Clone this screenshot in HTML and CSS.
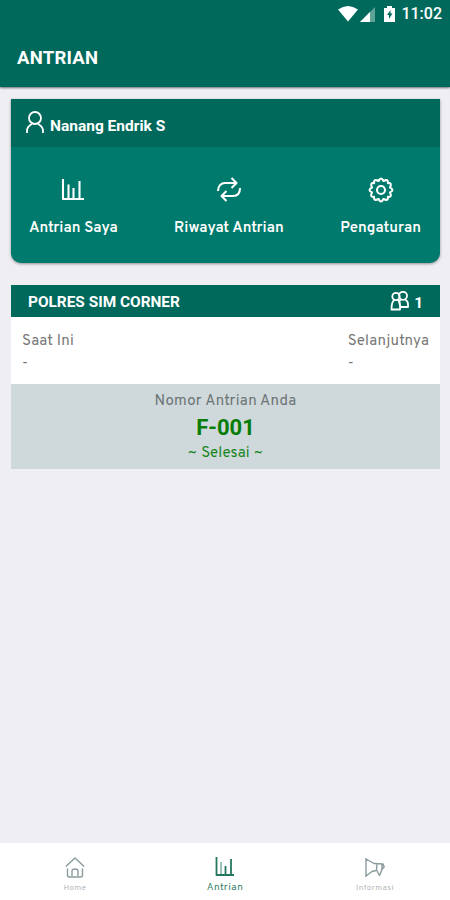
FILE: index.html
```html
<!DOCTYPE html>
<html lang="id">
<head>
<meta charset="utf-8">
<title>Antrian</title>
<link rel="stylesheet" href="styles.css">
</head>
<body>
<header class="top">
  <div class="status">
    <svg class="wifi" width="20" height="16" viewBox="0 0 20 16"><path d="M0 3.5Q10-3.5 20 3.5L10 15.5Z" fill="#fff"/></svg>
    <svg class="signal" width="15" height="15" viewBox="0 0 15 15"><path d="M0 15L15 0V15Z" fill="#5da398"/><path d="M0 15L10 5V15Z" fill="#fff"/></svg>
    <svg class="battery" width="11" height="16" viewBox="0 0 11 16"><path d="M3 0h5v2h3v14H0V2h3z" fill="#fff"/><path d="M6.5 4L3 9h2v4l3.500-5.500h-2z" fill="#00695c"/></svg>
    <span class="clock">11:02</span>
  </div>
  <h1 class="title">ANTRIAN</h1>
</header>
<main class="content">
  <section class="profile">
    <div class="user">
      <svg width="18" height="23" viewBox="0 0 18 23"><g class="line"><circle cx="9" cy="7" r="6"/><path d="M1 22v-2c0-3.500 2-5.500 5-7M17 22v-2c0-3.500-2-5.500-5-7"/></g></svg>
      <span class="name">Nanang Endrik S</span>
    </div>
    <nav class="actions">
      <a class="action"><svg width="24" height="26" viewBox="0 0 24 26"><path class="line bars" d="M2 2v20h21M7.500 21V7.500M12.500 21v-10M18.500 21V4"/></svg><span>Antrian Saya</span></a>
      <a class="action"><svg width="26" height="26" viewBox="0 0 26 26"><path class="line arrows" d="M2 14C2 9 5 6 9 6h11M15.500 1l5 5-5 5M24 11c0 6-3 8-7 8H7M10.500 14l-5 5 5 5"/></svg><span>Riwayat Antrian</span></a>
      <a class="action"><svg width="26" height="26" viewBox="0 0 26 26"><g class="line gear"><path d="M10.600 4Q13-1 15.400 4Q20.700 1.600 19.900 6.100Q24.400 5.300 22 10.600Q27 13 22 15.400Q24.400 20.700 19.900 19.900Q20.700 24.400 15.400 22Q13 27 10.600 22Q5.300 24.400 6.100 19.900Q1.600 20.700 4 15.400Q-1 13 4 10.600Q1.600 5.300 6.100 6.100Q5.300 1.600 10.600 4Z"/><circle cx="13" cy="13" r="4"/></g></svg><span>Pengaturan</span></a>
    </nav>
  </section>
  <section class="queue">
    <div class="place">
      <span>POLRES SIM CORNER</span>
      <span class="count"><svg width="19" height="20" viewBox="0 0 19 20"><g class="line"><circle cx="6" cy="5.500" r="3.700"/><circle cx="13" cy="4.800" r="4"/><path d="M4.500 9C2.500 10 1.500 13 1.500 18.500h8.500V14c0-3-1-4.500-2.500-5.500M11 8.500c-1.500 1-2.500 2-1.500 4l1 3.500h7.500V13c0-2-1-3.500-3-4.500"/></g></svg><span class="total">1</span></span>
    </div>
    <div class="turns">
      <div class="turn"><span class="label">Saat Ini</span><span class="dash">-</span></div>
      <div class="turn"><span class="label">Selanjutnya</span><span class="dash">-</span></div>
    </div>
    <div class="mine">
      <span class="caption">Nomor Antrian Anda</span>
      <strong class="number">F-001</strong>
      <span class="state">~ Selesai ~</span>
    </div>
  </section>
</main>
<footer class="tabs">
  <a class="tab"><svg width="20" height="21" viewBox="0 0 20 21"><path class="line" d="M.8 9.500L10 1l9.200 8.500M2.500 11.500V18q0 2 2 2h11q2 0 2-2v-6.500M7 19v-5q0-2 3-2t3 2v5"/></svg><span>Home</span></a>
  <a class="tab active"><svg width="20" height="21" viewBox="0 0 20 21"><path class="line" d="M1.500 1v18H19M10.500 18v-8M16 18V3"/><path class="line pale" d="M6 18V6"/></svg><span>Antrian</span></a>
  <a class="tab"><svg width="20" height="21" viewBox="0 0 20 21"><path class="line" d="M1 1v19M1 2l8 4.500 9 .5 1.200 3-3 3M1 19l6-4.500 4-1M12 7l-.5 6 3 5.500 2.500-6V7"/></svg><span>Informasi</span></a>
</footer>
</body>
</html>
```
FILE: styles.css
```css
* { box-sizing: border-box; }
body { margin: 0; height: 900px; display: flex; flex-direction: column; background: #efeef3; font-family: Overpass, Roboto, sans-serif; color: #fff; }
svg { display: block; flex: none; }
span, strong { white-space: nowrap; }
.line { fill: none; stroke: currentColor; stroke-width: 1.8; stroke-linejoin: round; }
.bars, .arrows, .gear { stroke-width: 2.1; }
.top { height: 87px; flex: none; background: #00695c; box-shadow: 0 1px 2px rgba(0,0,0,.55); }
.status { height: 28px; display: flex; align-items: center; padding: 0 8px 0 338px; }
.signal { margin-left: 2px; }
.battery { margin-left: 9px; }
.clock { margin-left: auto; font: 500 16px/30px Roboto, sans-serif; }
.title { margin: 17px 0 0 17px; font: 700 18.500px/26px Roboto, sans-serif; letter-spacing: .25px; }
.content { flex: 1; padding: 12px 10px 0 11px; }
.profile { height: 164px; overflow: hidden; border-radius: 0 0 10px 10px; background: #007a6c; box-shadow: 0 1px 3px rgba(0,0,0,.4); }
.user { height: 48px; display: flex; padding: 12px 0 0 15px; gap: 6px; background: #00695c; }
.name { padding-top: 5px; font: 700 15.500px/20px Roboto, sans-serif; }
.actions { display: flex; justify-content: space-between; padding: 30px 19px 0 18px; }
.action { display: flex; flex-direction: column; align-items: center; }
.action span { margin-top: 16px; font-size: 15px; line-height: 20px; font-weight: 600; letter-spacing: 0; }
.queue { margin-top: 22px; }
.place { height: 32px; display: flex; justify-content: space-between; align-items: center; padding: 2px 17px 0; background: #00695c; font: 700 15.400px/20px Roboto, sans-serif; }
.count { display: flex; gap: 5px; align-items: center; margin-top: -3px; }
.total { padding-top: 4px; }
.turns { height: 67px; display: flex; justify-content: space-between; padding: 15px 11px 0; background: #fff; color: #777; font-size: 15px; line-height: 20px; }
.turn { display: flex; flex-direction: column; }
.label { letter-spacing: .2px; }
.dash { margin-top: 2px; }
.mine { height: 85px; padding-top: 8px; display: flex; flex-direction: column; align-items: center; background: #cfd8da; }
.caption { color: #6c7476; font-size: 15px; line-height: 20px; letter-spacing: .3px; }
.number { color: #087d08; font: 700 22px/31px Roboto, sans-serif; }
.state { margin-top: 1px; color: #16851c; font-size: 15px; line-height: 20px; letter-spacing: .2px; }
.tabs { height: 57px; flex: none; display: flex; background: #fff; }
.tab { flex: 1; display: flex; flex-direction: column; align-items: center; padding-top: 14px; color: #8a9b9d; }
.tab .line { stroke-width: 1.4; }
.tab span { margin-top: 4px; font-size: 8px; line-height: 12px; letter-spacing: .5px; color: #b1b8bb; }
.tab.active { color: #26775f; padding-top: 13px; }
.tab.active .line { stroke-width: 1.8; }
.tab.active span { margin-top: 5px; font-size: 10px; color: #347d6c; }
.tab.active .pale { opacity: .5; }
```
